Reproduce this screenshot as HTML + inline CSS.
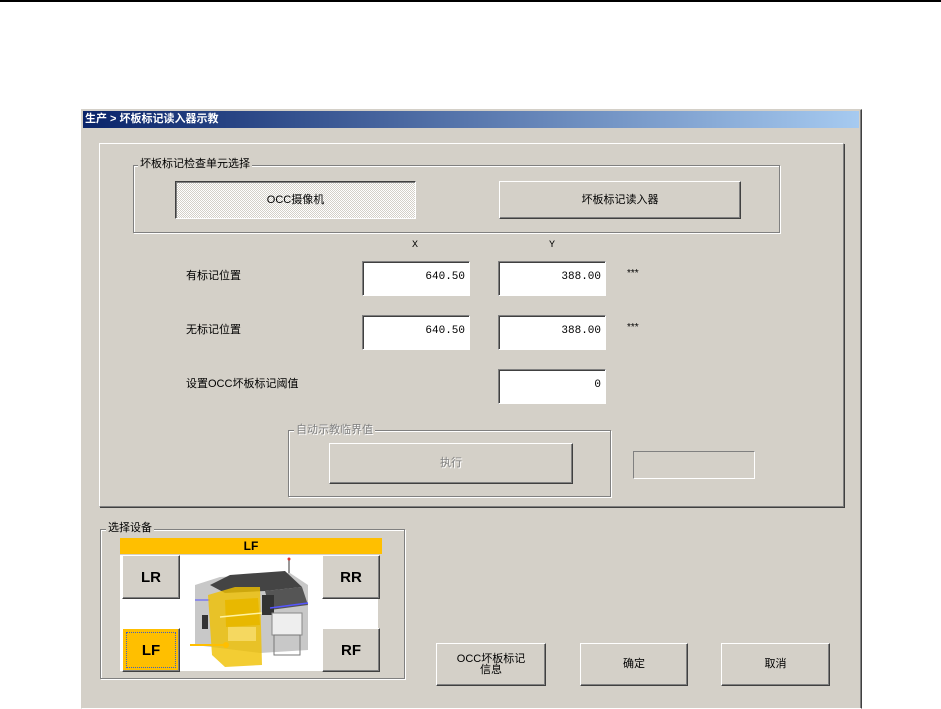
<!DOCTYPE html>
<html><head><meta charset="utf-8"><style>
*{margin:0;padding:0;box-sizing:border-box}
body{width:941px;height:705px;background:#fff;position:relative;overflow:hidden;font-family:"Liberation Sans","Noto Sans CJK SC","WenQuanYi Zen Hei",sans-serif;font-size:11px;color:#000}
.a{position:absolute}
.topline{left:0;top:0;width:941px;height:2px;background:#000}
.win{left:81px;top:109px;width:781px;height:600px;background:#d4d0c8;border:1px solid #fff;border-right-color:#404040;border-left-color:#d4d0c8;border-top-color:#d4d0c8;box-shadow:inset -1px 0 #808080}
.title{left:83px;top:111px;width:776px;height:17px;background:linear-gradient(90deg,#0a246a,#a6caf0);color:#fff;font-weight:bold;font-size:11px;line-height:17px;padding-left:2px}
.raised{border:1px solid;border-color:#fff #808080 #808080 #fff}
.sunk{background:#fff;border:1px solid;border-color:#808080 #fff #fff #808080;box-shadow:inset 1px 1px #404040}
.grp{border:1px solid #808080;box-shadow:1px 1px #fff,inset 1px 1px #fff}
.lg{background:#d4d0c8;padding:0 2px;font-size:11px;line-height:12px}
.btn{background:#d4d0c8;border:1px solid;border-color:#fff #404040 #404040 #fff;box-shadow:inset -1px -1px #808080;display:flex;align-items:center;justify-content:center;text-align:center;font-size:11px;line-height:11px}
.pressed{border-color:#404040 #fff #fff #404040;box-shadow:inset 1px 1px #808080;background:repeating-conic-gradient(#fff 0 25%,#d4d0c8 0 50%) 0 0/2px 2px}
.tf{font-family:"Liberation Mono",monospace;font-size:11px;text-align:right;padding-right:4px;line-height:31px}
.dev{font-weight:bold;font-size:15px;font-family:"Liberation Sans",sans-serif}
</style></head><body>
<div class="a topline"></div>
<div class="a win"></div>
<div class="a title">生产 &gt; 坏板标记读入器示教</div>

<div class="a raised" style="left:99px;top:143px;width:745px;height:364px;box-shadow:1px 1px #404040"></div>

<div class="a grp" style="left:133px;top:165px;width:647px;height:68px"></div>
<div class="a lg" style="left:138px;top:158px">坏板标记检查单元选择</div>
<div class="a btn pressed" style="left:175px;top:181px;width:241px;height:38px">OCC摄像机</div>
<div class="a btn" style="left:499px;top:181px;width:242px;height:38px">坏板标记读入器</div>

<div class="a" style="left:412px;top:240px;font-family:'Liberation Mono',monospace;font-size:10px">X</div>
<div class="a" style="left:549px;top:240px;font-family:'Liberation Mono',monospace;font-size:10px">Y</div>

<div class="a" style="left:186px;top:267px">有标记位置</div>
<div class="a sunk tf" style="left:362px;top:261px;width:108px;height:35px">640.50</div>
<div class="a sunk tf" style="left:498px;top:261px;width:108px;height:35px">388.00</div>
<div class="a" style="left:627px;top:268px;font-size:10px">***</div>

<div class="a" style="left:186px;top:321px">无标记位置</div>
<div class="a sunk tf" style="left:362px;top:315px;width:108px;height:35px">640.50</div>
<div class="a sunk tf" style="left:498px;top:315px;width:108px;height:35px">388.00</div>
<div class="a" style="left:627px;top:322px;font-size:10px">***</div>

<div class="a" style="left:186px;top:375px">设置OCC坏板标记阈值</div>
<div class="a sunk tf" style="left:498px;top:369px;width:108px;height:35px">0</div>

<div class="a grp" style="left:288px;top:430px;width:323px;height:67px"></div>
<div class="a lg" style="left:294px;top:424px;color:#808080;text-shadow:1px 1px #fff">自动示教临界值</div>
<div class="a btn" style="left:329px;top:443px;width:244px;height:41px;color:#808080;text-shadow:1px 1px #fff">执行</div>
<div class="a" style="left:633px;top:451px;width:122px;height:28px;border:1px solid;border-color:#808080 #fff #fff #808080"></div>

<div class="a grp" style="left:100px;top:529px;width:305px;height:150px"></div>
<div class="a lg" style="left:106px;top:522px">选择设备</div>
<div class="a" style="left:120px;top:538px;width:262px;height:16px;background:#ffbf00;text-align:center;font-weight:bold;font-size:12px;line-height:16px">LF</div>
<div class="a" style="left:120px;top:555px;width:258px;height:116px;background:#fff"></div>
<svg class="a" style="left:190px;top:555px" width="130" height="116" viewBox="0 0 130 116">
<rect x="98" y="5" width="2" height="18" fill="#999"/>
<circle cx="99" cy="4" r="1.5" fill="#d33"/>
<polygon points="5,30 30,22 100,18 118,30 118,95 70,98 5,90" fill="#c8c8c8"/>
<polygon points="20,30 40,20 95,16 112,32 75,36 35,38" fill="#444"/>
<polygon points="75,36 112,32 118,50 80,55" fill="#555"/>
<rect x="72" y="40" width="12" height="20" fill="#333"/>
<line x1="80" y1="53" x2="118" y2="48" stroke="#55f" stroke-width="1.5"/>
<line x1="5" y1="45" x2="20" y2="45" stroke="#55f"/>
<rect x="82" y="58" width="30" height="22" fill="#eee" stroke="#888"/>
<rect x="84" y="80" width="26" height="20" fill="none" stroke="#777"/>
<rect x="12" y="60" width="6" height="14" fill="#333"/>
<polygon points="18,40 45,32 70,32 72,110 35,112 22,100" fill="#f0c000" opacity=".8"/>
<polygon points="35,45 68,43 70,70 36,72" fill="#e8b800"/>
<line x1="30" y1="62" x2="72" y2="58" stroke="#fff3a0" stroke-width="1.5"/>
<rect x="38" y="72" width="28" height="14" fill="#f5d860"/>
<circle cx="36" cy="90" r="3" fill="#ffbf00"/>
<line x1="-70" y1="90" x2="36" y2="90" stroke="#ffbf00" stroke-width="2"/>
</svg>
<div class="a btn dev" style="left:122px;top:555px;width:58px;height:44px">LR</div>
<div class="a btn dev" style="left:322px;top:555px;width:58px;height:44px">RR</div>
<div class="a btn dev" style="left:322px;top:628px;width:58px;height:44px">RF</div>
<div class="a btn dev" style="left:122px;top:628px;width:58px;height:44px;background:#ffbf00;outline:1px dotted #4060c0;outline-offset:-5px">LF</div>

<div class="a btn" style="left:436px;top:643px;width:110px;height:43px">OCC坏板标记<br>信息</div>
<div class="a btn" style="left:580px;top:643px;width:108px;height:43px">确定</div>
<div class="a btn" style="left:721px;top:643px;width:109px;height:43px">取消</div>
</body></html>
